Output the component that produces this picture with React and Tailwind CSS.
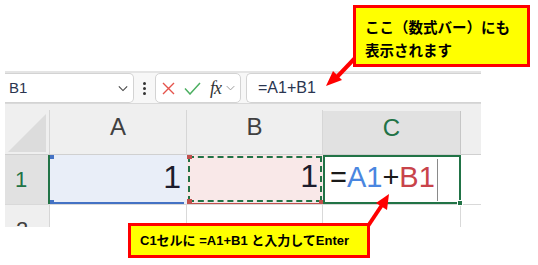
import React from 'react'

function Chevron({ className }) {
  return (
    <svg className={className} viewBox="0 0 12 8" fill="none" stroke="currentColor" strokeWidth={1.3}>
      <path d="M1 1.5l5 5 5-5" />
    </svg>
  )
}

function Toolbar() {
  return (
    <div className="h-[32px] border-t-2 border-[#e4e4e4] bg-[#f7f7f7] flex">
      {/* name box */}
      <div className="w-[129px] h-full bg-white border border-l-0 border-[#d3d3d3] rounded-r-[5px] flex items-center justify-between pl-[4px] pr-[5px]">
        <span className="text-[15px] text-[#2a3550] font-['Liberation_Sans',sans-serif]">B1</span>
        <Chevron className="w-[10px] h-[7px] text-[#444]" />
      </div>
      <div className="w-[21px] flex items-center justify-center">
        <div className="flex flex-col gap-[2px]">
          <span className="w-[3px] h-[3px] bg-[#333] rounded-full" />
          <span className="w-[3px] h-[3px] bg-[#333] rounded-full" />
          <span className="w-[3px] h-[3px] bg-[#333] rounded-full" />
        </div>
      </div>
      {/* cancel / enter / fx */}
      <div className="w-[86px] h-full bg-white border border-[#d3d3d3] rounded-[5px] flex items-center pl-[6px]">
        <svg className="w-[13px] h-[13px]" viewBox="0 0 13 13" stroke="#e5534b" strokeWidth={1.4} fill="none">
          <path d="M1 1l11 11M12 1L1 12" />
        </svg>
        <svg className="w-[17px] h-[13px] ml-[9px]" viewBox="0 0 17 13" stroke="#4caf61" strokeWidth={1.5} fill="none">
          <path d="M1 6.5l5 5.5L16 1" />
        </svg>
        <span className="ml-[9px] text-[18px] leading-none italic text-[#333] font-['Liberation_Serif',serif] tracking-[-1px]">fx</span>
        <Chevron className="ml-[5px] w-[9px] h-[6px] text-[#999]" />
      </div>
      {/* formula */}
      <div className="ml-[5px] flex-1 h-full bg-white border border-r-0 border-[#d3d3d3] rounded-l-[5px] flex items-center pl-[11px]">
        <span className="text-[16px] text-[#2a3550] font-['Liberation_Sans',sans-serif]">=A1+B1</span>
      </div>
    </div>
  )
}

function Headers() {
  return (
    <div className="bg-[#efefef] border-t border-[#d9d9d9] pt-[6px]">
      <div className="h-[45px] flex border-b border-[#d0d0d0] font-['Liberation_Sans',sans-serif] text-[24px]">
        <div className="w-[45px] border-r border-[#d6d6d6] relative">
          <svg className="absolute left-[3px] top-[4px] w-[38px] h-[38px]" viewBox="0 0 38 38">
            <path d="M38 0L38 38L0 38Z" fill="#dcdcdc" />
          </svg>
        </div>
        <div className="w-[137px] border-r border-[#d6d6d6] flex items-center justify-center pb-[10px] text-[#404040]">A</div>
        <div className="w-[136px] border-r border-[#d6d6d6] flex items-center justify-center pb-[10px] text-[#404040]">B</div>
        <div className="w-[138px] mt-[1px] bg-[#e1e1e1] border-r border-[#c6c6c6] flex items-center justify-center pb-[10px] text-[#217346]">C</div>
        <div className="flex-1" />
      </div>
    </div>
  )
}

function Row1() {
  return (
    <div className="h-[50px] flex border-b border-[#d9d9d9] font-['Liberation_Sans',sans-serif]">
      <div className="w-[45px] bg-[#e1e1e1] border-r-2 border-[#217346] flex items-center pl-[10px] text-[22px] text-[#217346]">1</div>
      {/* A1 */}
      <div className="w-[137px] relative bg-[#e9eef8] flex items-center justify-end pr-[6px] pb-[6px] text-[32px] text-[#1c1c2c]">
        1
        <span className="absolute left-[2px] right-[3px] bottom-0 h-[2px] bg-[#4472c4]" />
        <span className="absolute left-0 top-0 w-[4px] h-[4px] bg-[#4472c4]" />
        <span className="absolute left-0 bottom-0 w-[4px] h-[4px] bg-[#4472c4]" />
      </div>
      {/* B1 */}
      <div className="w-[136px] relative bg-[#f9e8e8] border-b border-[#c0504d]">
        <div className="absolute inset-[1px] border-2 border-dashed border-[#217346]" />
        <div className="h-full flex items-center justify-end pr-[5px] pb-[6px] text-[32px] text-[#1c1c2c]">1</div>
        <span className="absolute left-0 top-0 w-[5px] h-[4px] bg-[#c0504d]" />
        <span className="absolute left-0 bottom-[-1px] w-[5px] h-[5px] bg-[#c0504d]" />
        <span className="absolute right-0 bottom-[-1px] w-[4px] h-[4px] bg-[#c0504d]" />
      </div>
      {/* C1 */}
      <div className="w-[138px] relative border-2 border-[#217346] bg-white flex items-center pl-[5px] text-[29px] leading-none">
        <span className="text-[#1a1a1a] -mt-[5px]">=</span>
        <span className="text-[#4a86e0] -mt-[5px]">A1</span>
        <span className="text-[#1a1a1a] -mt-[5px]">+</span>
        <span className="text-[#c8434a] -mt-[5px]">B1</span>
        <span className="ml-[2px] w-px h-[42px] bg-[#8a8a8a]" />
        <span className="absolute right-[-4px] bottom-[-4px] w-[6px] h-[6px] bg-[#217346] border border-white" />
      </div>
      <div className="flex-1 bg-white" />
    </div>
  )
}

function Row2() {
  return (
    <div className="h-[22px] flex overflow-hidden font-['Liberation_Sans',sans-serif]">
      <div className="w-[45px] bg-[#efefef] border-r border-[#d6d6d6] pl-[11px] pt-[14px] text-[22px] leading-none text-[#404040]">2</div>
      <div className="w-[137px] border-r border-[#d9d9d9]" />
      <div className="w-[136px] border-r border-[#d9d9d9]" />
      <div className="w-[138px] border-r border-[#d9d9d9]" />
      <div className="flex-1" />
    </div>
  )
}

export default function App() {
  return (
    <div className="relative w-[538px] h-[265px] bg-white overflow-hidden">
      <div className="pt-[71px] pl-[5px]">
        <div className="w-[476px]">
          <Toolbar />
          <Headers />
          <Row1 />
          <Row2 />
        </div>
      </div>

      {/* arrows */}
      <svg className="absolute left-0 top-0 w-[538px] h-[265px] pointer-events-none" viewBox="0 0 538 265">
        <line x1="356" y1="57" x2="336" y2="78" stroke="#ff0000" strokeWidth="4" />
        <polygon points="326,86 333,71 342,80" fill="#ff0000" />
        <line x1="368" y1="226" x2="382" y2="205" stroke="#ff0000" strokeWidth="4" />
        <polygon points="389,194 376,203 387,210" fill="#ff0000" />
      </svg>

      {/* callouts */}
      <div className="absolute left-[353px] top-[5px] w-[177px] h-[62px] bg-[#ffff00] border-[3px] border-[#ff0000] pl-[9px] pt-[7px] text-[14.5px] leading-[23px] font-bold text-black font-['Noto_Sans_CJK_JP',sans-serif]">
        <div>ここ（数式バー）にも</div>
        <div>表示されます</div>
      </div>
      <div className="absolute left-[128px] top-[223px] w-[242px] h-[35px] bg-[#ffff00] border-[3px] border-[#ff0000] pl-[9px] flex items-center text-[13px] font-bold text-black font-['Liberation_Sans','Noto_Sans_CJK_JP',sans-serif] whitespace-nowrap">
        C1セルに =A1+B1 と入力してEnter
      </div>
    </div>
  )
}
